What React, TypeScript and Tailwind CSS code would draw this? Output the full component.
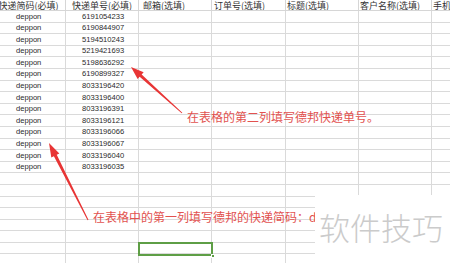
import React from "react";

const headers = [
  "快递简码(必填)",
  "快递单号(必填)",
  "邮箱(选填)",
  "订单号(选填)",
  "标题(选填)",
  "客户名称(选填)",
  "手机号(选填)",
];

const headerAlign = [
  "justify-center",
  "justify-center",
  "justify-start pl-[4px]",
  "justify-start pl-[2px]",
  "justify-start pl-[1px]",
  "justify-start pl-[1px]",
  "justify-start pl-[1px]",
];

const bodyAlign = [
  "justify-start pl-[24px]",
  "justify-start pl-[16px]",
  "justify-start",
  "justify-start",
  "justify-start",
  "justify-start",
  "justify-start",
];

const nums = [
  "6191054233",
  "6190844907",
  "5194510243",
  "5219421693",
  "5198636292",
  "6190899327",
  "8033196420",
  "8033196400",
  "8033196391",
  "8033196121",
  "8033196066",
  "8033196067",
  "8033196040",
  "8033196035",
];

const ROWS = 22;

function arrowPoints(
  x1: number,
  y1: number,
  x2: number,
  y2: number,
  headLen: number,
  headW: number,
  w0: number,
  w1: number
) {
  const dx = x2 - x1;
  const dy = y2 - y1;
  const L = Math.hypot(dx, dy);
  const ux = dx / L;
  const uy = dy / L;
  const px = -uy;
  const py = ux;
  const bx = x2 - ux * headLen;
  const by = y2 - uy * headLen;
  const pts: [number, number][] = [
    [x1 + (px * w0) / 2, y1 + (py * w0) / 2],
    [bx + (px * w1) / 2, by + (py * w1) / 2],
    [bx + (px * headW) / 2, by + (py * headW) / 2],
    [x2, y2],
    [bx - (px * headW) / 2, by - (py * headW) / 2],
    [bx - (px * w1) / 2, by - (py * w1) / 2],
    [x1 - (px * w0) / 2, y1 - (py * w0) / 2],
  ];
  return pts.map((p) => `${p[0].toFixed(2)},${p[1].toFixed(2)}`).join(" ");
}

export default function App() {
  const cells: React.ReactNode[] = [];
  headers.forEach((h, i) => {
    cells.push(
      <div
        key={`h${i}`}
        className={`flex items-center overflow-hidden whitespace-nowrap border-r border-b border-[#d6d6d6] text-[9px] leading-none text-[#333] ${headerAlign[i]}`}
        style={{ fontFamily: '"Noto Sans CJK SC", "Liberation Sans", sans-serif' }}
      >
        {h}
      </div>
    );
  });
  for (let r = 0; r < ROWS; r++) {
    for (let c = 0; c < 7; c++) {
      let content = "";
      if (r < nums.length) {
        if (c === 0) content = "deppon";
        if (c === 1) content = nums[r];
      }
      cells.push(
        <div
          key={`c${r}-${c}`}
          className={`flex items-center overflow-hidden whitespace-nowrap border-r border-b border-[#dadada] text-[7.6px] leading-none text-[#2a2a2a] ${bodyAlign[c]}`}
          style={{ fontFamily: '"Liberation Sans", Arial, sans-serif' }}
        >
          {content}
        </div>
      );
    }
  }

  return (
    <div className="relative w-[450px] h-[263px] overflow-hidden bg-white">
      <div className="ml-[-8px] grid grid-cols-[74px_73px_73px_74px_73px_73px_73px] grid-rows-[11px_repeat(22,11.6px)]">
        {cells}
      </div>

      {/* selected cell */}
      <div className="absolute left-[138px] top-[242px] w-[75px] h-[14px] border-2 border-[#5e9e46]">
        <div className="absolute right-[-4px] bottom-[-4px] w-[4px] h-[4px] bg-[#5e9e46] border border-white" />
      </div>

      {/* arrows */}
      <svg className="absolute left-0 top-0" width="450" height="263" viewBox="0 0 450 263">
        <polygon points={arrowPoints(182, 113, 131, 67, 13, 9, 1, 3)} fill="#e83535" />
        <polygon points={arrowPoints(88, 220, 49, 143, 14, 9, 1, 3.2)} fill="#e83535" />
      </svg>

      {/* annotations */}
      <div
        className="absolute left-[187px] top-[111px] whitespace-nowrap text-[12px] leading-none text-[#e2524f]"
        style={{ fontFamily: '"Noto Sans CJK SC", sans-serif' }}
      >
        在表格的第二列填写德邦快递单号。
      </div>
      <div
        className="absolute left-[93px] top-[211px] w-[222px] overflow-hidden whitespace-nowrap text-[12px] leading-none text-[#e2524f]"
        style={{ fontFamily: '"Noto Sans CJK SC", sans-serif' }}
      >
        在表格中的第一列填写德邦的快递简码：d
      </div>

      {/* watermark box */}
      <div className="absolute left-[315px] top-[195px] w-[135px] h-[68px] bg-white">
        <div
          className="pl-[4px] pt-[16px] whitespace-nowrap text-[31px] leading-none text-[#cbcbcb]"
          style={{ fontFamily: '"Noto Sans CJK SC", sans-serif', fontWeight: 300 }}
        >
          软件技巧
        </div>
      </div>
    </div>
  );
}
